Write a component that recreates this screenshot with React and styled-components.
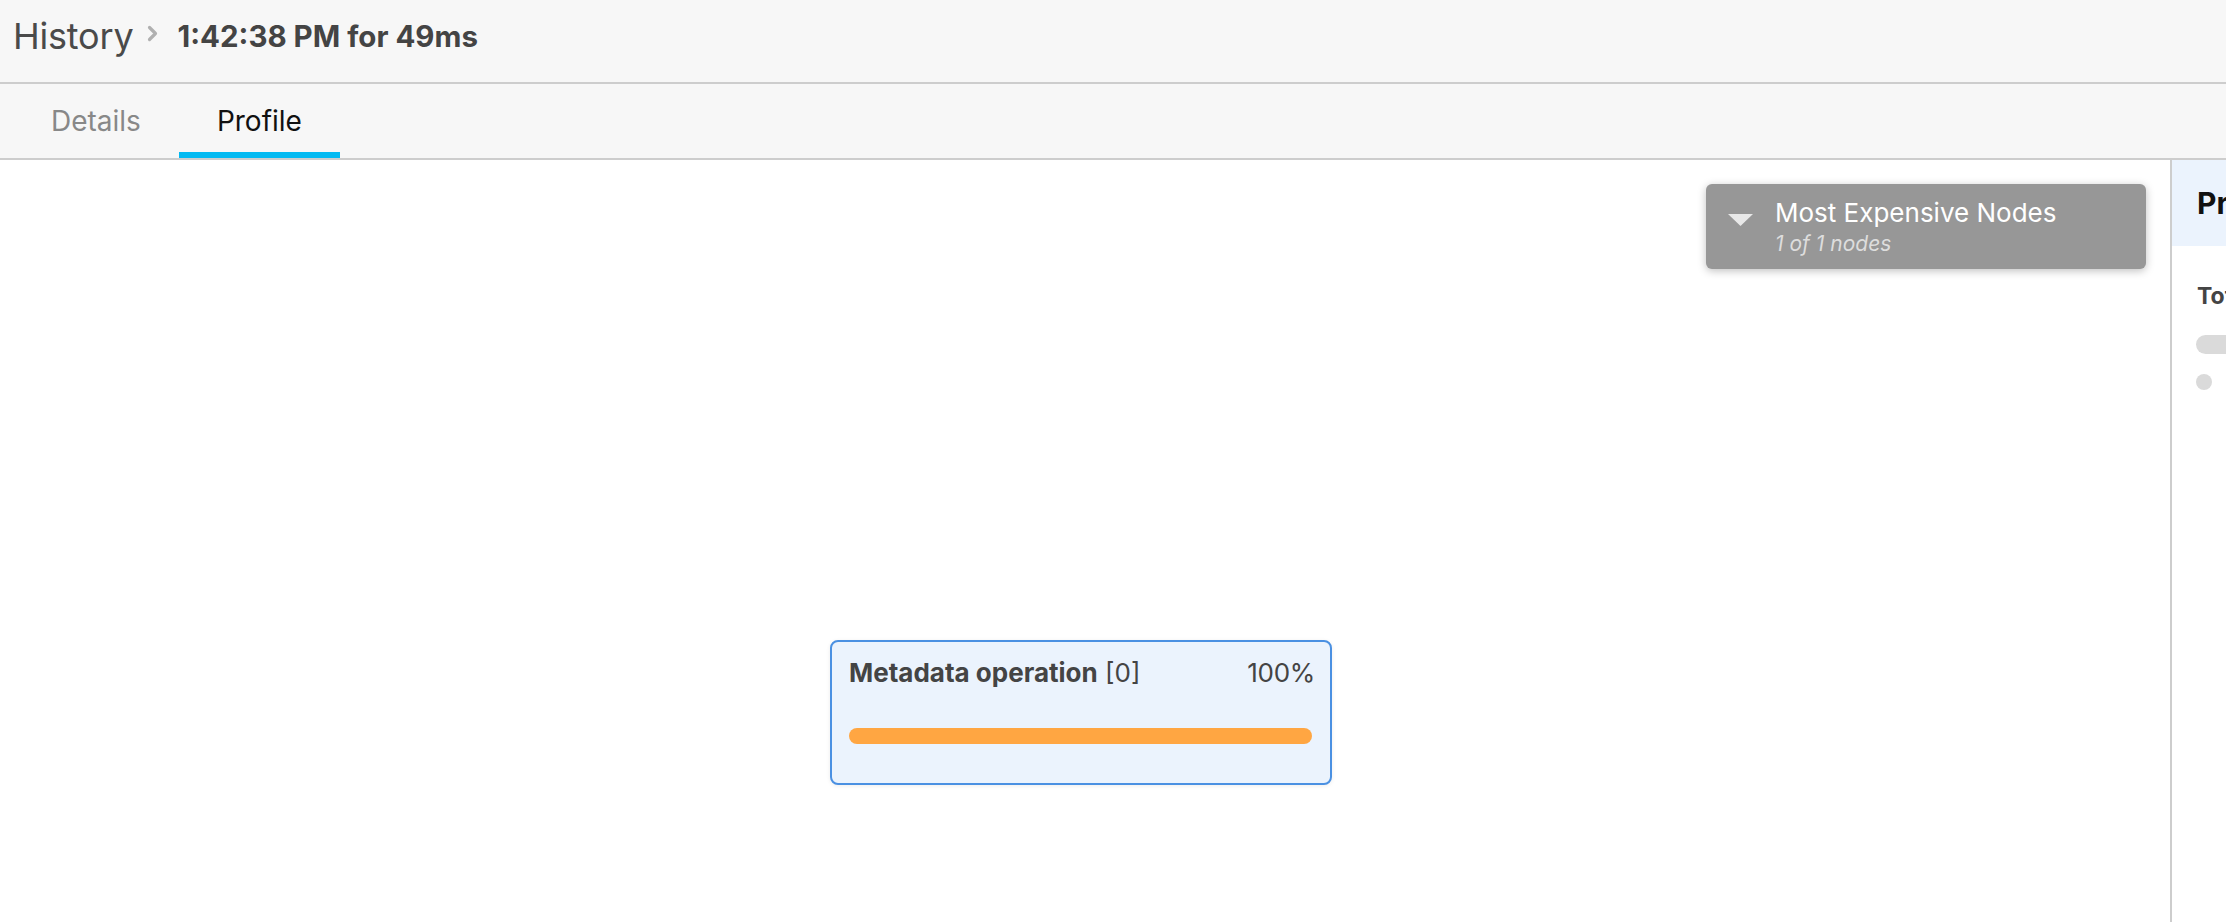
import React from "react";
import styled, { createGlobalStyle } from "styled-components";

const GlobalStyle = createGlobalStyle`
  html, body {
    margin: 0;
    padding: 0;
    overflow: hidden;
    background: #ffffff;
  }
  body {
    font-family: Inter, "Noto Sans", "Liberation Sans", sans-serif;
  }
  * { box-sizing: border-box; }
`;

const Page = styled.div`
  display: flex;
  flex-direction: column;
  height: 100vh;
  width: 100vw;
  overflow: hidden;
`;

const Header = styled.header`
  flex: 0 0 84px;
  display: flex;
  align-items: center;
  padding: 0 0 11px 13px;
  background: #f7f7f7;
  border-bottom: 2px solid #cdcdcd;
`;

const Crumb = styled.span`
  font-size: 36px;
  color: #4a4a4a;
  letter-spacing: -0.2px;
`;

const ChevronIcon = styled.svg`
  width: 11px;
  height: 17px;
  margin: 0 19px 4px 14px;
  color: #b0b0b0;
`;

const Title = styled.h1`
  margin: 0;
  font-size: 29.5px;
  font-weight: 700;
  color: #444444;
`;

const TabBar = styled.nav`
  flex: 0 0 76px;
  display: flex;
  align-items: stretch;
  padding-left: 13px;
  background: #f7f7f7;
  border-bottom: 2px solid #cdcdcd;
`;

const Tab = styled.div`
  position: relative;
  display: flex;
  align-items: center;
  padding: 0 38px;
  font-size: 28px;
  color: ${(p) => (p.$active ? "#111111" : "#888888")};

  &::after {
    content: "";
    position: absolute;
    left: 0;
    right: 0;
    bottom: 0;
    height: 6px;
    background: ${(p) => (p.$active ? "#03baf2" : "transparent")};
  }
`;

const Main = styled.main`
  flex: 1 1 auto;
  display: flex;
  min-height: 0;
`;

const Canvas = styled.section`
  position: relative;
  flex: 0 0 2170px;
  background: #ffffff;
`;

const NodesBox = styled.div`
  position: absolute;
  top: 24px;
  right: 24px;
  width: 440px;
  height: 85px;
  display: flex;
  align-items: flex-start;
  padding: 13px 22px 0 22px;
  background: #979797;
  border-radius: 6px;
  box-shadow: 0 2px 8px rgba(0, 0, 0, 0.25);
`;

const Caret = styled.svg`
  width: 25px;
  height: 12px;
  margin: 17px 22px 0 0;
  flex: 0 0 auto;
`;

const NodesText = styled.div`
  display: flex;
  flex-direction: column;
`;

const NodesTitle = styled.div`
  font-size: 26px;
  line-height: 32px;
  color: #ffffff;
`;

const NodesSub = styled.div`
  margin-top: 2px;
  font-size: 21px;
  line-height: 26px;
  font-style: italic;
  color: #dddddd;
`;

const NodeCard = styled.div`
  position: absolute;
  left: 830px;
  top: 480px;
  width: 502px;
  height: 145px;
  padding: 15px 18px 0 17px;
  background: #ebf3fd;
  border: 2px solid #4a90e2;
  border-radius: 8px;
  box-shadow: 0 1px 4px rgba(0, 0, 0, 0.08);
  display: flex;
  flex-direction: column;
`;

const NodeHead = styled.div`
  display: flex;
  justify-content: space-between;
  align-items: center;
  font-size: 26px;
  line-height: 32px;
  color: #444444;
`;

const NodeName = styled.span`
  font-weight: 700;
`;

const NodeIndex = styled.span`
  font-weight: 400;
`;

const Percent = styled.span`
  margin-right: -3px;
  letter-spacing: -0.3px;
`;

const Bar = styled.div`
  margin-top: 39px;
  height: 16px;
  border-radius: 8px;
  background: #ffa642;
`;

const SidePanel = styled.aside`
  flex: 0 0 520px;
  border-left: 2px solid #cdcdcd;
  display: flex;
  flex-direction: column;
  background: #ffffff;
`;

const PanelHead = styled.div`
  height: 86px;
  display: flex;
  align-items: center;
  padding-left: 25px;
  background: #ebf3fd;
  font-size: 30px;
  font-weight: 700;
  color: #111111;
  white-space: nowrap;
`;

const PanelBody = styled.div`
  padding: 36px 24px 0 24px;
  display: flex;
  flex-direction: column;
`;

const PanelLabel = styled.div`
  font-size: 23px;
  font-weight: 700;
  color: #444444;
  line-height: 28px;
  margin-left: 1px;
`;

const SkeletonPill = styled.div`
  margin-top: 25px;
  width: 320px;
  height: 19px;
  border-radius: 10px;
  background: #dadada;
`;

const LegendRow = styled.div`
  margin-top: 20px;
  display: flex;
  align-items: center;
  gap: 40px;
`;

const Dot = styled.span`
  width: 16px;
  height: 16px;
  border-radius: 50%;
  background: #dadada;
`;

const SkeletonText = styled.span`
  width: 120px;
  height: 12px;
  border-radius: 6px;
  background: #e6e6e6;
`;

export default function App() {
  return (
    <>
      <GlobalStyle />
      <Page>
        <Header>
          <Crumb>History</Crumb>
          <ChevronIcon viewBox="0 0 11 17" aria-hidden="true">
            <polyline
              points="2.5,2.5 8.5,8.5 2.5,14.5"
              fill="none"
              stroke="currentColor"
              strokeWidth="3.2"
              strokeLinecap="round"
              strokeLinejoin="round"
            />
          </ChevronIcon>
          <Title>1:42:38 PM for 49ms</Title>
        </Header>
        <TabBar>
          <Tab>Details</Tab>
          <Tab $active>Profile</Tab>
        </TabBar>
        <Main>
          <Canvas>
            <NodesBox>
              <Caret viewBox="0 0 25 12" aria-hidden="true">
                <polygon points="0,0 25,0 12.5,12" fill="#e8e8e8" />
              </Caret>
              <NodesText>
                <NodesTitle>Most Expensive Nodes</NodesTitle>
                <NodesSub>1 of 1 nodes</NodesSub>
              </NodesText>
            </NodesBox>
            <NodeCard>
              <NodeHead>
                <span>
                  <NodeName>Metadata operation</NodeName>{" "}
                  <NodeIndex>[0]</NodeIndex>
                </span>
                <Percent>100%</Percent>
              </NodeHead>
              <Bar />
            </NodeCard>
          </Canvas>
          <SidePanel>
            <PanelHead>Profile Overview</PanelHead>
            <PanelBody>
              <PanelLabel>Total Time</PanelLabel>
              <SkeletonPill />
              <LegendRow>
                <Dot />
                <SkeletonText />
              </LegendRow>
            </PanelBody>
          </SidePanel>
        </Main>
      </Page>
    </>
  );
}
